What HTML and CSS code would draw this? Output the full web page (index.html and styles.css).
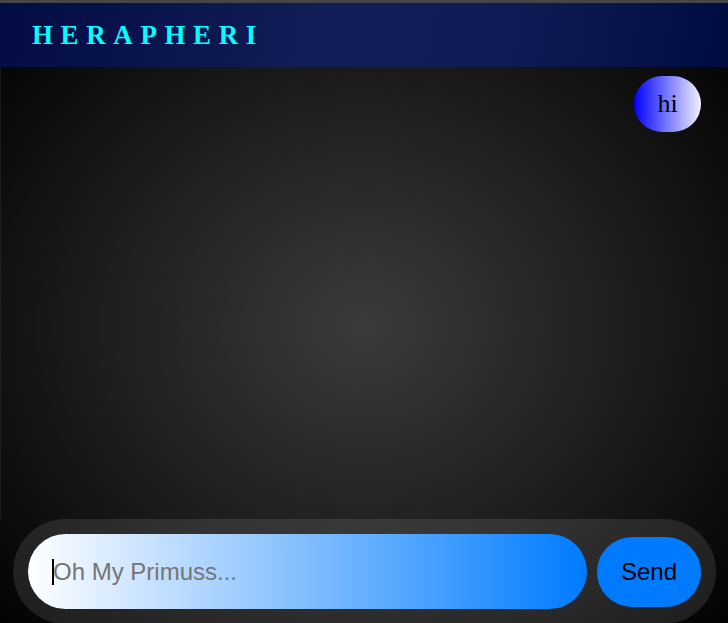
FILE: index.html
```html
<!DOCTYPE html>
<html lang="en">
<head>
<meta charset="utf-8">
<title>HERAPHERI</title>
<link rel="stylesheet" href="styles.css">
</head>
<body>
<div class="app">
  <header class="topbar">
    <h1 class="brand">HERAPHERI</h1>
  </header>
  <main class="chat">
    <div class="bubble">hi</div>
  </main>
  <form class="composer" onsubmit="return false">
    <div class="field">
      <input class="input" type="text" placeholder="Oh My Primuss...">
    </div>
    <button class="send" type="button">Send</button>
  </form>
</div>
</body>
</html>
```
FILE: styles.css
```css
html, body {
  margin: 0;
  padding: 0;
  overflow: hidden;
  background: #000;
}

.app {
  height: 621px;
  display: flex;
  flex-direction: column;
  border-top: 3px solid #464646;
  background: radial-gradient(ellipse at 50% 52%, #3b3b3b 0%, #1e1e1e 50%, #000 100%);
}

.topbar {
  height: 64px;
  flex: none;
  display: flex;
  align-items: center;
  padding-left: 32px;
  background: linear-gradient(100deg, #030c43 0%, #121e57 45%, #0f1b54 70%, #000c40 100%);
}

.brand {
  margin: 0;
  font-family: "Liberation Serif", "Times New Roman", serif;
  font-weight: bold;
  font-size: 27px;
  letter-spacing: 7.6px;
  color: #00ffff;
  line-height: 1;
}

.chat {
  flex: 1;
  display: flex;
  flex-direction: column;
  align-items: flex-end;
  padding: 9px 27px 0 0;
  border-left: 1px solid rgba(255, 255, 255, 0.07);
}

.bubble {
  width: 67px;
  height: 56px;
  border-radius: 28px;
  display: flex;
  align-items: center;
  justify-content: center;
  background: linear-gradient(to right, #0000ff, #f2f2ff);
  font-family: "Liberation Serif", "Times New Roman", serif;
  font-size: 26px;
  color: #000;
}

.composer {
  flex: none;
  margin: 0 12px 0 13px;
  padding: 15px;
  display: flex;
  align-items: center;
  gap: 10px;
  border-radius: 53px;
  background: rgba(255, 255, 255, 0.1);
}

.field {
  flex: 1;
  position: relative;
}

.field::before {
  content: "";
  position: absolute;
  left: 24px;
  top: 25px;
  width: 2px;
  height: 26px;
  background: #000;
}

.input {
  display: block;
  width: 100%;
  box-sizing: border-box;
  height: 75px;
  border: none;
  outline: none;
  border-radius: 38px;
  padding: 0 0 0 25px;
  background: linear-gradient(to right, #ffffff 0%, #007bff 100%);
  font-family: "Liberation Sans", Arial, sans-serif;
  font-size: 24px;
  color: #000;
}

.input::placeholder {
  color: #757575;
}

.send {
  width: 104px;
  height: 70px;
  border: none;
  border-radius: 35px;
  background: #007bff;
  color: #000;
  font-family: "Liberation Sans", Arial, sans-serif;
  font-size: 24px;
  padding: 0;
}
```
